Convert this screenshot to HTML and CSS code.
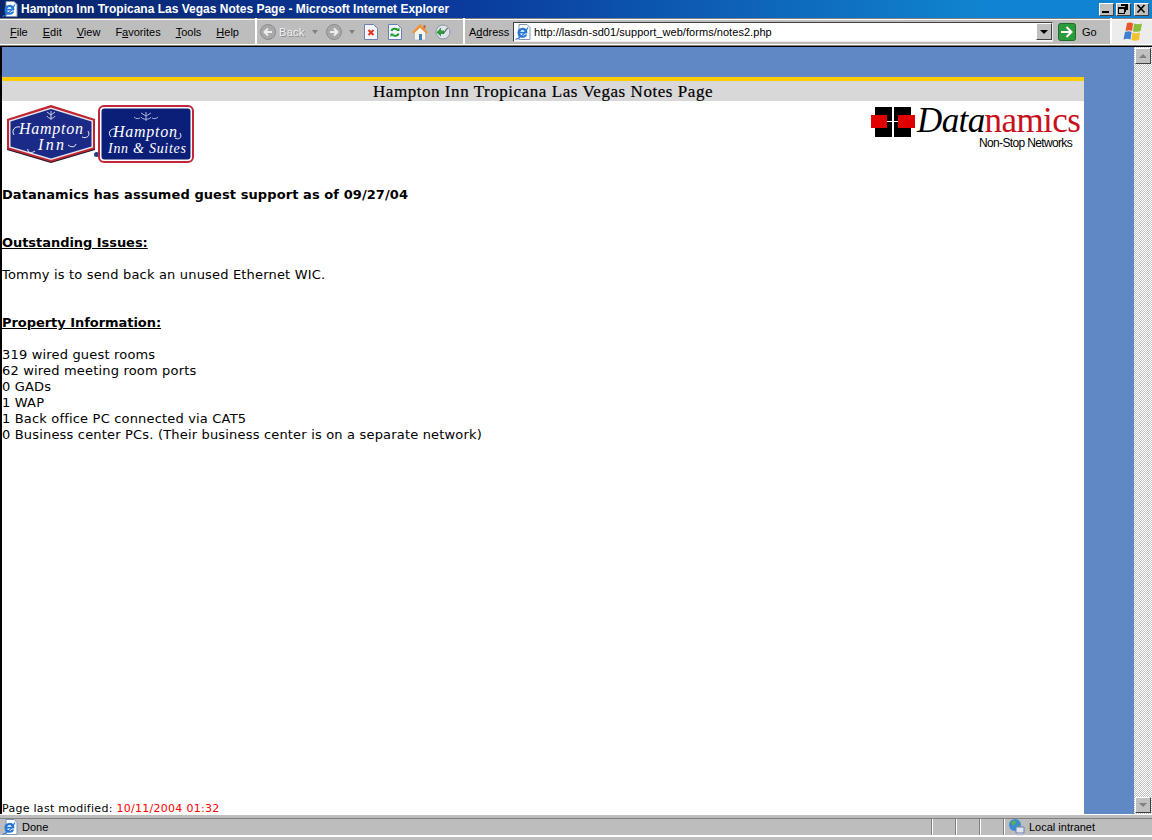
FILE: index.html
```html
<!DOCTYPE html>
<html lang="en">

<head>
    <meta charset="UTF-8">
    <title>Hampton Inn Tropicana Las Vegas Notes Page - Microsoft Internet Explorer</title>
    <link rel="stylesheet" href="styles.css">
</head>

<body>
    <svg class="defs" width="0" height="0">
        <symbol id="ie-page" viewBox="0 0 16 16">
            <path d="M4 .5h8l3 3v12H4z" fill="#fff" stroke="#7f93b5" />
            <path d="M2.500 9a5 5 0 0 1 9.800-1.500v2H5.200a2.500 2.500 0 0 0 4.600 1h2.400A5 5 0 0 1 2.500 9zM5.200 7.700h4.600a2.400 2.400 0 0 0-4.600 0z" fill="#2477d6" fill-rule="evenodd" />
            <path d="M.5 15c2.500.8 9-4.500 12.500-11.500" fill="none" stroke="#2477d6" stroke-width="1.200" />
        </symbol>
    </svg>

    <div class="window">
        <div class="titlebar">
            <svg class="title-icon" width="16" height="16"><use href="#ie-page" /></svg>
            <span class="title-text">Hampton Inn Tropicana Las Vegas Notes Page - Microsoft Internet Explorer</span>
            <div class="win-buttons">
                <span class="win-btn"><svg width="11" height="10"><path d="M1 7h7v2H1z" /></svg></span>
                <span class="win-btn"><svg width="11" height="10"><path d="M3 0h7v6H8v2H7V2H3zM0 3h7v7H0zM1 5v4h5V5z" fill-rule="evenodd" /></svg></span>
                <span class="win-btn win-close"><svg width="11" height="10"><path d="M1.500 1l7 7.500M8.500 1l-7 7.500" stroke="#000" stroke-width="1.700" /></svg></span>
            </div>
        </div>

        <div class="toolbar">
            <nav class="menu">
                <span><u>F</u>ile</span>
                <span><u>E</u>dit</span>
                <span><u>V</u>iew</span>
                <span>F<u>a</u>vorites</span>
                <span><u>T</u>ools</span>
                <span><u>H</u>elp</span>
            </nav>
            <div class="buttons">
                <svg class="nav-icon" width="16" height="16" viewBox="0 0 16 16">
                    <circle cx="8" cy="8" r="7.500" fill="#a8a8a8" stroke="#8d8d8d" />
                    <path d="M12 8H5M8 4.500L4.500 8 8 11.500" fill="none" stroke="#eee" stroke-width="2" />
                </svg>
                <span class="back-label">Back</span>
                <span class="drop"></span>
                <svg class="nav-icon" width="16" height="16" viewBox="0 0 16 16">
                    <circle cx="8" cy="8" r="7.500" fill="#a8a8a8" stroke="#8d8d8d" />
                    <path d="M4 8h7M8 4.500L11.500 8 8 11.500" fill="none" stroke="#eee" stroke-width="2" />
                </svg>
                <span class="drop drop-two"></span>
                <svg class="tool-icon" width="14" height="16" viewBox="0 0 14 16">
                    <path d="M.5.5h9l4 4v11H.5z" fill="#f4f6fc" stroke="#6a7fb5" />
                    <path d="M4.500 6l5 5M9.500 6l-5 5" stroke="#e0321c" stroke-width="2" />
                </svg>
                <svg class="tool-icon refresh" width="14" height="16" viewBox="0 0 14 16">
                    <path d="M.5.5h9l4 4v11H.5z" fill="#f4f6fc" stroke="#6a7fb5" />
                    <path d="M3.500 7c.5-2.500 4-3 6-1.500M10.500 9.500c-.5 2.500-4 3-6 1.500" fill="none" stroke="#1a9c2c" stroke-width="2" />
                    <path d="M8 7h3.500V3.500zM6 9.500H2.500V13z" fill="#1a9c2c" />
                </svg>
                <svg class="tool-icon home" width="18" height="18" viewBox="0 0 18 18">
                    <path d="M3.500 9.500L9 4.500l5.500 5V17h-11z" fill="#f7f4ea" stroke="#a9b2c6" stroke-width=".7" />
                    <path d="M1 9.500L9 1l8 8.500-1.500 1L9 4.500 2.500 10.500z" fill="#f2932c" />
                    <path d="M8 11h3v6H8z" fill="#3f7fc0" />
                    <path d="M12.500 2h2v3.500h-2z" fill="#c9662a" />
                </svg>
                <svg class="tool-icon search" width="16" height="16" viewBox="0 0 16 16">
                    <circle cx="8" cy="8" r="7" fill="#dfe3ea" stroke="#8c93a4" />
                    <path d="M1.500 8.500L6 3.500v3h3V10H6v2.500z" fill="#2f9a3a" />
                    <path d="M8 10l4.500-6" stroke="#465" stroke-width="1.200" />
                </svg>
            </div>
            <div class="address">
                <span class="address-label">A<u>d</u>dress</span>
                <div class="address-box">
                    <svg width="16" height="16"><use href="#ie-page" /></svg>
                    <span class="url">http://lasdn-sd01/support_web/forms/notes2.php</span>
                    <span class="address-drop"><i></i></span>
                </div>
                <svg class="go-icon" width="18" height="18" viewBox="0 0 18 18">
                    <rect x=".5" y=".5" width="17" height="17" rx="2" fill="#2a9a3a" stroke="#1f6d2a" />
                    <path d="M3 9h10M8.500 4l5 5-5 5" fill="none" stroke="#fff" stroke-width="2" />
                </svg>
                <span class="go-label">Go</span>
            </div>
            <div class="flag-box">
                <svg width="21" height="19" viewBox="0 0 21 19">
                    <path d="M5 1c2.500-1 4.500-.5 6 .5L10 9C8 8 6 8 3.500 9z" fill="#e8552b" />
                    <path d="M12 1.500c2.500 1 5 1 8 0L18.500 9c-3 1-5.500 1-7.500.5z" fill="#8abf3a" />
                    <path d="M3 10c2.500-1 4.500-1 6.500 0L8.500 17.500c-2-1-4.500-1-7 0z" fill="#3d7fd0" />
                    <path d="M10.500 10.500c2.500 1 5 1 7.500 0L17 18c-3 1-5 1-7.500 0z" fill="#f2c32c" />
                </svg>
            </div>
        </div>

        <div class="viewport">
            <div class="page">
                <div class="sheet">
                    <h1 class="page-title">Hampton Inn Tropicana Las Vegas Notes Page</h1>
                    <div class="logos">
                        <div class="hotel-logos">
                            <svg width="92" height="60" viewBox="0 0 92 60">
                                <path d="M45 58L89 45V15L45 1 1 15v30z" fill="#15182c" />
                                <path d="M45 0l44 14v30L45 57 1 44V14z" fill="#c0242e" />
                                <path d="M45 2.500L87 15.500v27L45 55 3 42.500v-27z" fill="#e6e6f0" />
                                <path d="M45 4L85.500 16.500v25L45 53.500 4.500 41.500v-25z" fill="#1b2a87" />
                                <path d="M41 11c1 3 7 3 8 0M45 6v9M41 7l4 3 4-3" fill="none" stroke="#c9cde6" stroke-width="1" />
                                <path d="M8 30c-3-5 1-9 6-8M82 26c3 5-2 8-6 6M29 46c-4 3-8 1-7-2M62 40c4 3 7 2 8-1" fill="none" stroke="#fff" stroke-width=".9" />
                                <text class="script" x="45" y="29" font-size="16" textLength="64">Hampton</text>
                                <text class="script" x="45" y="45" font-size="16" textLength="26">Inn</text>
                            </svg>
                            <span class="logo-dot"></span>
                            <svg width="96" height="60" viewBox="0 0 96 60">
                                <rect x="1" y="1" width="94" height="56" rx="5" fill="#fff" stroke="#c1263a" stroke-width="2" />
                                <rect x="3.500" y="3.500" width="89" height="51" rx="3" fill="#0c1f78" />
                                <path d="M43 12c1 3 9 3 10 0M48 7v9M43 8l5 3 5-3M36 12c2 2 4 2 6 1M60 12c-2 2-4 2-6 1" fill="none" stroke="#aab0d4" stroke-width="1" />
                                <text class="script" x="47" y="32" font-size="16" textLength="64">Hampton</text>
                                <text class="script" x="49" y="48" font-size="14" textLength="78">Inn &amp; Suites</text>
                                <path d="M13 32c-4-5 0-9 5-8M82 28c3 5-2 7-5 5" fill="none" stroke="#fff" stroke-width=".9" />
                            </svg>
                        </div>
                        <div class="datanamics">
                            <div class="dn-row">
                                <svg width="44" height="31" viewBox="0 0 44 31">
                                    <path d="M4 1h17v30H4zM23 1h17v30H23z" fill="#000" />
                                    <path d="M0 9h16v13H0zM27 9h17v13H27z" fill="#e00000" />
                                    <path d="M16 15h11v1H16z" fill="#fff" />
                                </svg>
                                <span class="dn-word"><i>Data</i><span class="dn-red">namics</span></span>
                            </div>
                            <div class="dn-tag">Non-Stop Networks</div>
                        </div>
                    </div>
                    <div class="notes">
                        <p class="note-first"><b>Datanamics has assumed guest support as of 09/27/04</b></p>
                        <p class="note-head"><b><u>Outstanding Issues:</u></b></p>
                        <p class="note-body">Tommy is to send back an unused Ethernet WIC.</p>
                        <p class="note-head"><b><u>Property Information:</u></b></p>
                        <p class="note-body">
                            319 wired guest rooms<br>
                            62 wired meeting room ports<br>
                            0 GADs<br>
                            1 WAP<br>
                            1 Back office PC connected via CAT5<br>
                            0 Business center PCs. (Their business center is on a separate network)
                        </p>
                    </div>
                    <div class="modified">Page last modified: <span class="stamp">10/11/2004 01:32</span></div>
                </div>
            </div>
            <div class="scrollbar">
                <span class="scroll-btn"><i class="arrow-up"></i></span>
                <span class="scroll-btn"><i class="arrow-down"></i></span>
            </div>
        </div>

        <div class="statusbar">
            <div class="status-row">
                <svg class="status-ie" width="16" height="16"><use href="#ie-page" /></svg>
                <span class="status-text">Done</span>
                <span class="status-cell"></span>
                <span class="status-cell"></span>
                <span class="status-cell"></span>
                <span class="status-zone">
                    <svg width="18" height="18" viewBox="0 0 18 18">
                        <circle cx="7" cy="7" r="6" fill="#3a8ad8" />
                        <path d="M3 4l4-2 1 3-3 3zM9 8l3-1v3l-2 1z" fill="#5ab04a" />
                        <path d="M8 9h8v6H8z" fill="#dfe6f2" stroke="#6a80b0" />
                        <path d="M9 15.500h6v2H9z" fill="#b8c4dc" />
                    </svg>
                    Local intranet
                </span>
            </div>
        </div>
    </div>
</body>

</html>
```

FILE: styles.css
```css
* {
    box-sizing: border-box;
}

html, body {
    margin: 0;
    height: 100%;
    overflow: hidden;
}

.defs {
    display: block;
}

.window {
    width: 1152px;
    height: 840px;
    display: flex;
    flex-direction: column;
    background: #bdbdbd;
    font-family: "Liberation Sans", Arial, sans-serif;
    font-size: 11px;
    color: #000;
}

/* title bar */
.titlebar {
    height: 18px;
    flex: none;
    display: flex;
    align-items: center;
    padding: 0 3px 0 2px;
    background: linear-gradient(90deg, #08246b 0%, #0a3a9c 40%, #1084d0 85%, #1084d0 100%);
    color: #fff;
}

.title-icon {
    flex: none;
    margin-right: 3px;
}

.title-text {
    font-weight: bold;
    font-size: 12px;
    white-space: nowrap;
}

.win-buttons {
    margin-left: auto;
    display: flex;
    gap: 2px;
}

.win-btn {
    width: 15px;
    height: 13px;
    display: flex;
    align-items: center;
    justify-content: center;
    background: #c0c0c0;
    border: 1px solid;
    border-color: #fff #404040 #404040 #fff;
}

.win-close {
    margin-left: 1px;
}

/* toolbar row */
.toolbar {
    height: 28px;
    flex: none;
    display: flex;
    align-items: center;
    border-bottom: 1px solid #808080;
    box-shadow: inset 0 1px 0 #808080, inset 0 2px 0 #fff, inset 0 -1px 0 #fff;
}

.menu {
    width: 257px;
    height: 100%;
    display: flex;
    align-items: center;
    gap: 15px;
    padding-left: 10px;
    border-right: 2px solid #fff;
    flex: none;
}

.buttons {
    width: 208px;
    height: 100%;
    display: flex;
    align-items: center;
    padding-left: 3px;
    border-right: 2px solid #fff;
    flex: none;
}

.back-label {
    color: #f0f0f0;
    text-shadow: 1px 1px 0 #8a8a8a;
    margin-left: 3px;
    width: 33px;
    letter-spacing: 0.3px;
}

.drop {
    width: 0;
    height: 0;
    margin: 0 8px 0 0;
    border: 3px solid transparent;
    border-top: 4px solid #808080;
    border-bottom: 0;
}

.drop-two {
    margin: 0 9px 0 7px;
}

.tool-icon {
    margin-right: 10px;
    flex: none;
}

.refresh {
    margin-right: 9px;
}

.home {
    margin-right: 6px;
}

.address {
    width: 647px;
    height: 100%;
    display: flex;
    align-items: center;
    padding-left: 4px;
    border-right: 2px solid #fff;
    flex: none;
}

.address-label {
    width: 44px;
    flex: none;
}

.address-box {
    width: 540px;
    height: 20px;
    display: flex;
    align-items: center;
    background: #fff;
    border: 1px solid;
    border-color: #404040 #e8e8e8 #e8e8e8 #404040;
    padding-left: 1px;
    flex: none;
}

.url {
    margin-left: 3px;
    letter-spacing: 0.05px;
    white-space: nowrap;
}

.address-drop {
    margin-left: auto;
    width: 16px;
    height: 17px;
    background: #c0c0c0;
    border: 1px solid;
    border-color: #fff #404040 #404040 #fff;
    display: flex;
    align-items: center;
    justify-content: center;
}

.address-drop i {
    border: 4px solid transparent;
    border-top: 4px solid #000;
    border-bottom: 0;
}

.go-icon {
    margin-left: 5px;
    flex: none;
}

.go-label {
    margin-left: 6px;
}

.flag-box {
    flex: 1;
    height: calc(100% - 3px);
    display: flex;
    align-items: center;
    justify-content: center;
    background: #ececec;
}

/* browser content */
.viewport {
    flex: 1;
    min-height: 0;
    display: flex;
    border-top: 1px solid #000;
    border-left: 2px solid #000;
}

.page {
    flex: 1;
    background: #6088c4;
    padding: 30px 50px 0 0;
    display: flex;
}

.sheet {
    flex: 1;
    display: flex;
    flex-direction: column;
    background: #fff;
    border-top: 4px solid #ffcc00;
}

.page-title {
    margin: 0;
    height: 20px;
    line-height: 21px;
    background: #d8d8d8;
    text-align: center;
    font-family: "Liberation Serif", "Times New Roman", serif;
    font-size: 17px;
    letter-spacing: 0.55px;
    font-weight: normal;
    white-space: nowrap;
    -webkit-text-stroke: 0.2px #000;
}

.logos {
    display: flex;
    justify-content: space-between;
    padding: 4px 3px 0 4px;
    height: 66px;
    flex: none;
}

.hotel-logos {
    display: flex;
    align-items: flex-start;
}

.logo-dot {
    width: 5px;
    height: 5px;
    margin: 47px -1px 0 -4px;
    border-radius: 50%;
    background: #25407e;
}

.script {
    font-family: "Liberation Serif", serif;
    font-style: italic;
    fill: #fff;
    text-anchor: middle;
}

.datanamics {
    width: 210px;
    display: flex;
    flex-direction: column;
}

.dn-row {
    display: flex;
    align-items: center;
    height: 32px;
}

.dn-word {
    margin-left: 2px;
    font-family: "Liberation Serif", serif;
    font-size: 35px;
    line-height: 32px;
    white-space: nowrap;
    letter-spacing: -0.6px;
}

.dn-red {
    color: #c8101c;
}

.dn-tag {
    font-size: 12px;
    letter-spacing: -0.65px;
    text-align: right;
    padding-right: 9px;
    margin-top: -1px;
}

.notes {
    font-family: "DejaVu Sans", Verdana, sans-serif;
    font-size: 13px;
    line-height: 16px;
    letter-spacing: 0.18px;
    flex: 1;
}

.notes p {
    margin: 0;
}

.notes b {
    letter-spacing: 0.08px;
}

.notes .note-first {
    margin-top: 20px;
}

.notes .note-head {
    margin-top: 32px;
}

.notes .note-head b {
    letter-spacing: -0.05px;
}

.notes .note-body {
    margin-top: 16px;
}

.modified {
    font-family: "DejaVu Sans", Verdana, sans-serif;
    font-size: 11px;
    letter-spacing: 0.28px;
    line-height: 11px;
    height: 11px;
    white-space: nowrap;
}

.stamp {
    color: #ff0000;
}

/* scrollbar */
.scrollbar {
    width: 18px;
    flex: none;
    display: flex;
    flex-direction: column;
    justify-content: space-between;
    padding: 1px;
    background: repeating-conic-gradient(#fff 0 25%, #c0c0c0 0 50%) 0 0 / 2px 2px;
}

.scroll-btn {
    width: 16px;
    height: 16px;
    display: flex;
    align-items: center;
    justify-content: center;
    background: #c0c0c0;
    border: 1px solid;
    border-color: #fff #404040 #404040 #fff;
}

.arrow-up {
    border: 4px solid transparent;
    border-bottom: 4px solid #808080;
    border-top: 0;
}

.arrow-down {
    border: 4px solid transparent;
    border-top: 4px solid #808080;
    border-bottom: 0;
}

/* status bar */
.statusbar {
    height: 26px;
    flex: none;
    padding: 3px 0;
    border-top: 1px solid #fff;
}

.status-row {
    height: 19px;
    display: flex;
    align-items: center;
    border-top: 1px solid #808080;
    border-bottom: 2px solid #fff;
    padding-left: 2px;
}

.status-ie {
    flex: none;
}

.status-text {
    margin-left: 4px;
    width: 909px;
    flex: none;
}

.status-cell {
    width: 24px;
    height: 100%;
    border-left: 1px solid #808080;
    box-shadow: inset 1px 0 0 #fff;
    flex: none;
}

.status-zone {
    flex: 1;
    height: 100%;
    display: flex;
    align-items: center;
    gap: 3px;
    border-left: 1px solid #808080;
    box-shadow: inset 1px 0 0 #fff;
    padding-left: 4px;
    white-space: nowrap;
}
```
